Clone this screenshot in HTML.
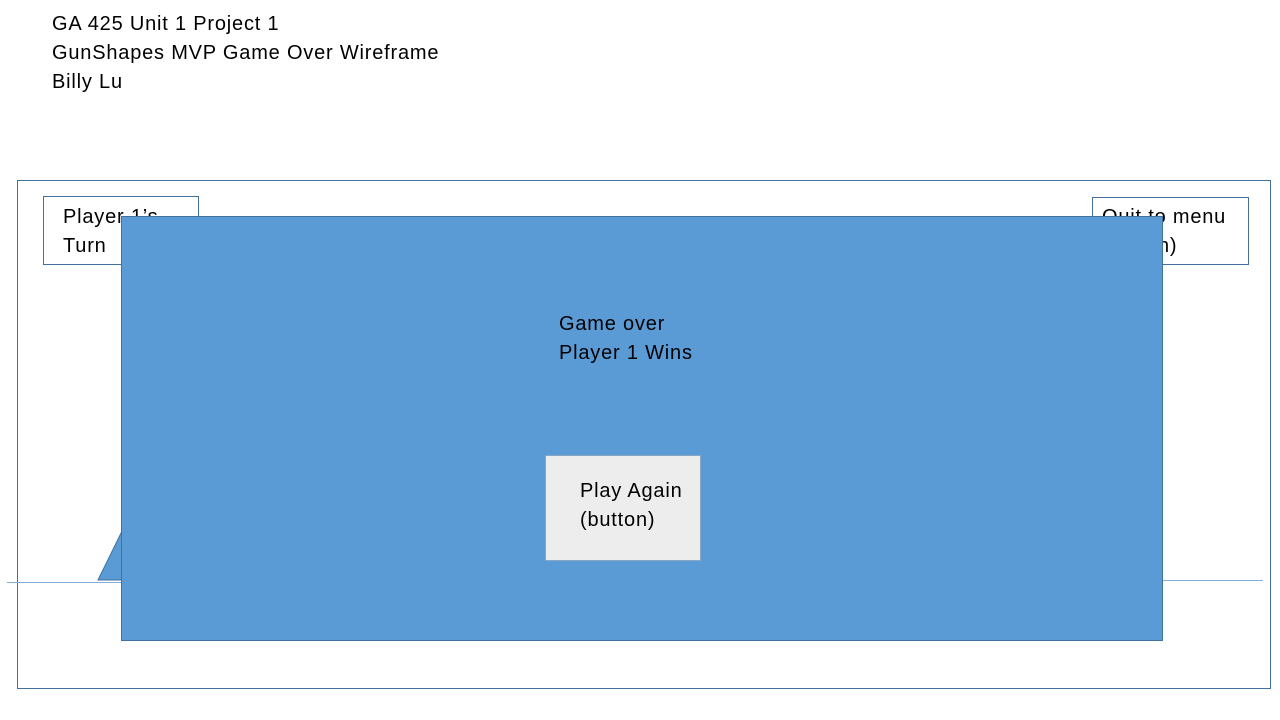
<!DOCTYPE html>
<html><head><style>
body{margin:0;width:1280px;height:720px;background:#fff;position:relative;overflow:hidden;font-family:"Liberation Sans",sans-serif;color:#000}
div{position:absolute;box-sizing:border-box}
.t{font-size:20px;line-height:29px;white-space:nowrap;letter-spacing:0.8px}
</style></head><body>
<div class="t" style="left:52px;top:10px">GA 425 Unit 1 Project 1<br>GunShapes MVP Game Over Wireframe<br>Billy Lu</div>
<div style="left:17px;top:180px;width:1254px;height:509px;border:1px solid #41719C"></div>
<div style="left:43px;top:196px;width:156px;height:69px;border:1px solid #41719C"></div>
<div class="t" style="left:63px;top:203px">Player 1’s<br>Turn</div>
<div style="left:1092px;top:197px;width:157px;height:68px;border:1px solid #41719C"></div>
<div class="t" style="left:1102px;top:203px">Quit to menu<br>(button)</div>
<svg style="position:absolute;left:0;top:0" width="1280" height="720">
<line x1="7" y1="582.5" x2="125" y2="582.5" stroke="#7FAEDB" stroke-width="1"/>
<line x1="1160" y1="580.5" x2="1263" y2="580.5" stroke="#7FAEDB" stroke-width="1"/>
<polygon points="98,580 125,525 125,580" fill="#5B9BD5" stroke="#41719C" stroke-width="1"/>
</svg>
<div style="left:121px;top:216px;width:1042px;height:425px;background:#5B9BD5;border:1px solid #41719C"></div>
<div class="t" style="left:559px;top:310px">Game over<br>Player 1 Wins</div>
<div style="left:545px;top:455px;width:156px;height:106px;background:#EDEDED;border:1px solid #8AA6C1"></div>
<div class="t" style="left:580px;top:477px">Play Again<br>(button)</div>
</body></html>
